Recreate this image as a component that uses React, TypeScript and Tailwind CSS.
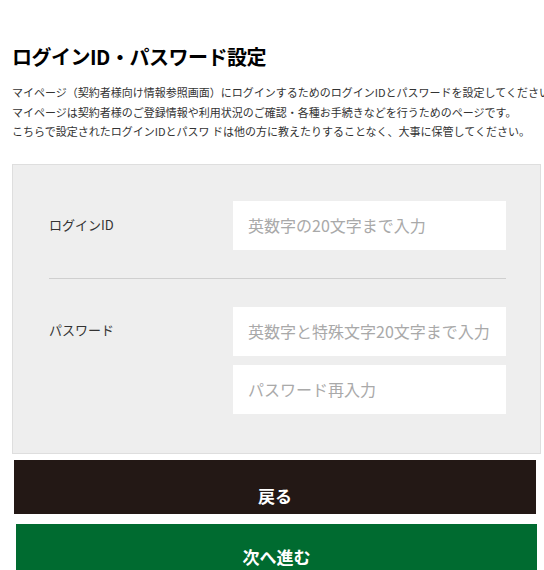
import type { JSX } from 'react'

const jp = { fontFamily: '"Noto Sans CJK JP", "Noto Sans", sans-serif' }

function Field({ placeholder }: { placeholder: string }): JSX.Element {
  return (
    <input
      type="text"
      placeholder={placeholder}
      className="h-[49px] w-[273px] bg-white px-[15px] text-[16px] text-gray-700 placeholder:text-[#a9a9a9] focus:outline-none"
    />
  )
}

export default function App(): JSX.Element {
  return (
    <div className="h-[570px] w-[544px] overflow-hidden bg-white text-[#222]" style={jp}>
      <h1 className="ml-[12px] pt-[43px] text-[20px] font-bold leading-[28px] tracking-[-0.5px] text-black">
        ログインID・パスワード設定
      </h1>
      <div className="ml-[12px] mt-[12px] whitespace-nowrap text-[11px] leading-[19.5px] text-[#333]">
        <p>マイページ（契約者様向け情報参照画面）にログインするためのログインIDとパスワードを設定してください。</p>
        <p>マイページは契約者様のご登録情報や利用状況のご確認・各種お手続きなどを行うためのページです。</p>
        <p>こちらで設定されたログインIDとパスワ ドは他の方に教えたりすることなく、大事に保管してください。</p>
      </div>

      <div className="ml-[12px] mt-[22px] w-[529px] border border-[#dedede] bg-[#eeeeee] pb-[39px] pl-[36px] pr-[34px] pt-[36px]">
        <div className="flex items-center justify-between pb-[28px]">
          <span className="text-[13px] text-[#333]">ログインID</span>
          <Field placeholder="英数字の20文字まで入力" />
        </div>
        <div className="border-t border-[#cfcfcf]" />
        <div className="flex justify-between pt-[28px]">
          <span className="mt-[13px] text-[13px] text-[#333]">パスワード</span>
          <div className="flex flex-col gap-[9px]">
            <Field placeholder="英数字と特殊文字20文字まで入力" />
            <Field placeholder="パスワード再入力" />
          </div>
        </div>
      </div>

      <button className="ml-[14px] mt-[6px] block h-[54px] w-[522px] bg-[#231815] pt-[18px] text-[17px] font-bold text-white">
        戻る
      </button>
      <button className="ml-[16px] mt-[10px] block h-[60px] w-[521px] bg-[#006b30] pt-[6px] text-[17px] font-bold text-white">
        次へ進む
      </button>
    </div>
  )
}
